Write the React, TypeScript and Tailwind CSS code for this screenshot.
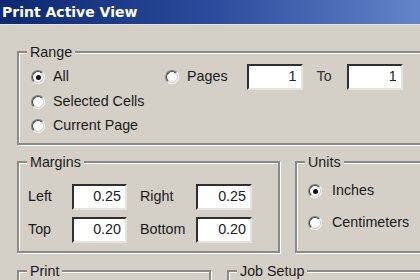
import React from "react";

function Radio({ checked }: { checked?: boolean }) {
  return (
    <span className="flex h-[14px] w-[14px] shrink-0 items-center justify-center rounded-full border border-t-[#808080] border-l-[#808080] border-r-white border-b-white">
      <span className="flex h-[12px] w-[12px] items-center justify-center rounded-full border border-t-[#404040] border-l-[#404040] border-r-[#d4d0c8] border-b-[#d4d0c8] bg-white">
        {checked && <span className="h-[5px] w-[5px] rounded-full bg-[#111]" />}
      </span>
    </span>
  );
}

function Field({ value, className }: { value: string; className?: string }) {
  return (
    <div
      className={`flex h-[26px] items-center justify-end border-2 border-t-[#303030] border-l-[#303030] border-r-[#e6e4de] border-b-[#e6e4de] bg-white pr-[4px] text-[#222] ${className ?? ""}`}
    >
      {value}
    </div>
  );
}

function Group({
  label,
  className,
  children,
}: {
  label: string;
  className?: string;
  children?: React.ReactNode;
}) {
  return (
    <fieldset
      className={`m-0 min-w-0 shrink-0 border-2 border-[#8c8a86] p-0 shadow-[inset_1px_1px_0_#fff,1px_1px_0_#fff] ${className ?? ""}`}
    >
      <legend className="ml-[8px] bg-[#d4d0c8] px-[3px] text-[14.3px] leading-[16px]">
        {label}
      </legend>
      {children}
    </fieldset>
  );
}

export default function App() {
  return (
    <div className="h-[280px] w-[420px] overflow-hidden bg-[#d4d0c8] font-['Liberation_Sans',Arial,sans-serif] text-[14.3px] text-[#1a1a1a]">
      <div className="flex h-[25px] items-center border-b border-[#e8e6e0] bg-linear-to-r from-[#0b2870] via-[#2b4b9c] to-[#6385c9] pl-[2px]">
        <span className="font-['DejaVu_Sans',sans-serif] text-[14px] font-bold leading-none text-white">
          Print Active View
        </span>
      </div>
      <div className="flex w-[520px] flex-col pl-[17px] pt-[19px]">
        <Group label="Range" className="w-[490px]">
          <div className="flex flex-col pb-[5px] pl-[12px] pt-[4px]">
            <div className="flex h-[26px] items-center">
              <div className="flex w-[134px] items-center gap-[8px]">
                <Radio checked />
                <span>All</span>
              </div>
              <div className="flex items-center">
                <Radio />
                <span className="ml-[8px]">Pages</span>
                <Field value="1" className="ml-[19px] w-[56px]" />
                <span className="ml-[14px] text-[#333]">To</span>
                <Field value="1" className="ml-[15px] w-[56px]" />
              </div>
            </div>
            <div className="flex h-[24px] items-center gap-[8px]">
              <Radio />
              <span>Selected Cells</span>
            </div>
            <div className="flex h-[24px] items-center gap-[8px]">
              <Radio />
              <span>Current Page</span>
            </div>
          </div>
        </Group>

        <div className="mt-[9px] flex gap-[15px]">
          <Group label="Margins" className="w-[263px]">
            <div className="grid grid-cols-[44px_55px_69px_56px] items-center gap-y-[7px] pb-[8px] pl-[9px] pt-[14px]">
              <span>Left</span>
              <Field value="0.25" />
              <span className="pl-[13px]">Right</span>
              <Field value="0.25" />
              <span>Top</span>
              <Field value="0.20" />
              <span className="pl-[13px]">Bottom</span>
              <Field value="0.20" />
            </div>
          </Group>
          <Group label="Units" className="w-[200px]">
            <div className="flex flex-col pl-[11px] pt-[5px]">
              <div className="flex h-[32px] items-center gap-[10px]">
                <Radio checked />
                <span>Inches</span>
              </div>
              <div className="flex h-[32px] items-center gap-[10px]">
                <Radio />
                <span>Centimeters</span>
              </div>
            </div>
          </Group>
        </div>

        <div className="mt-[10px] flex gap-[16px]">
          <Group label="Print" className="h-[60px] w-[194px]" />
          <Group label="Job Setup" className="h-[60px] w-[250px]" />
        </div>
      </div>
    </div>
  );
}
